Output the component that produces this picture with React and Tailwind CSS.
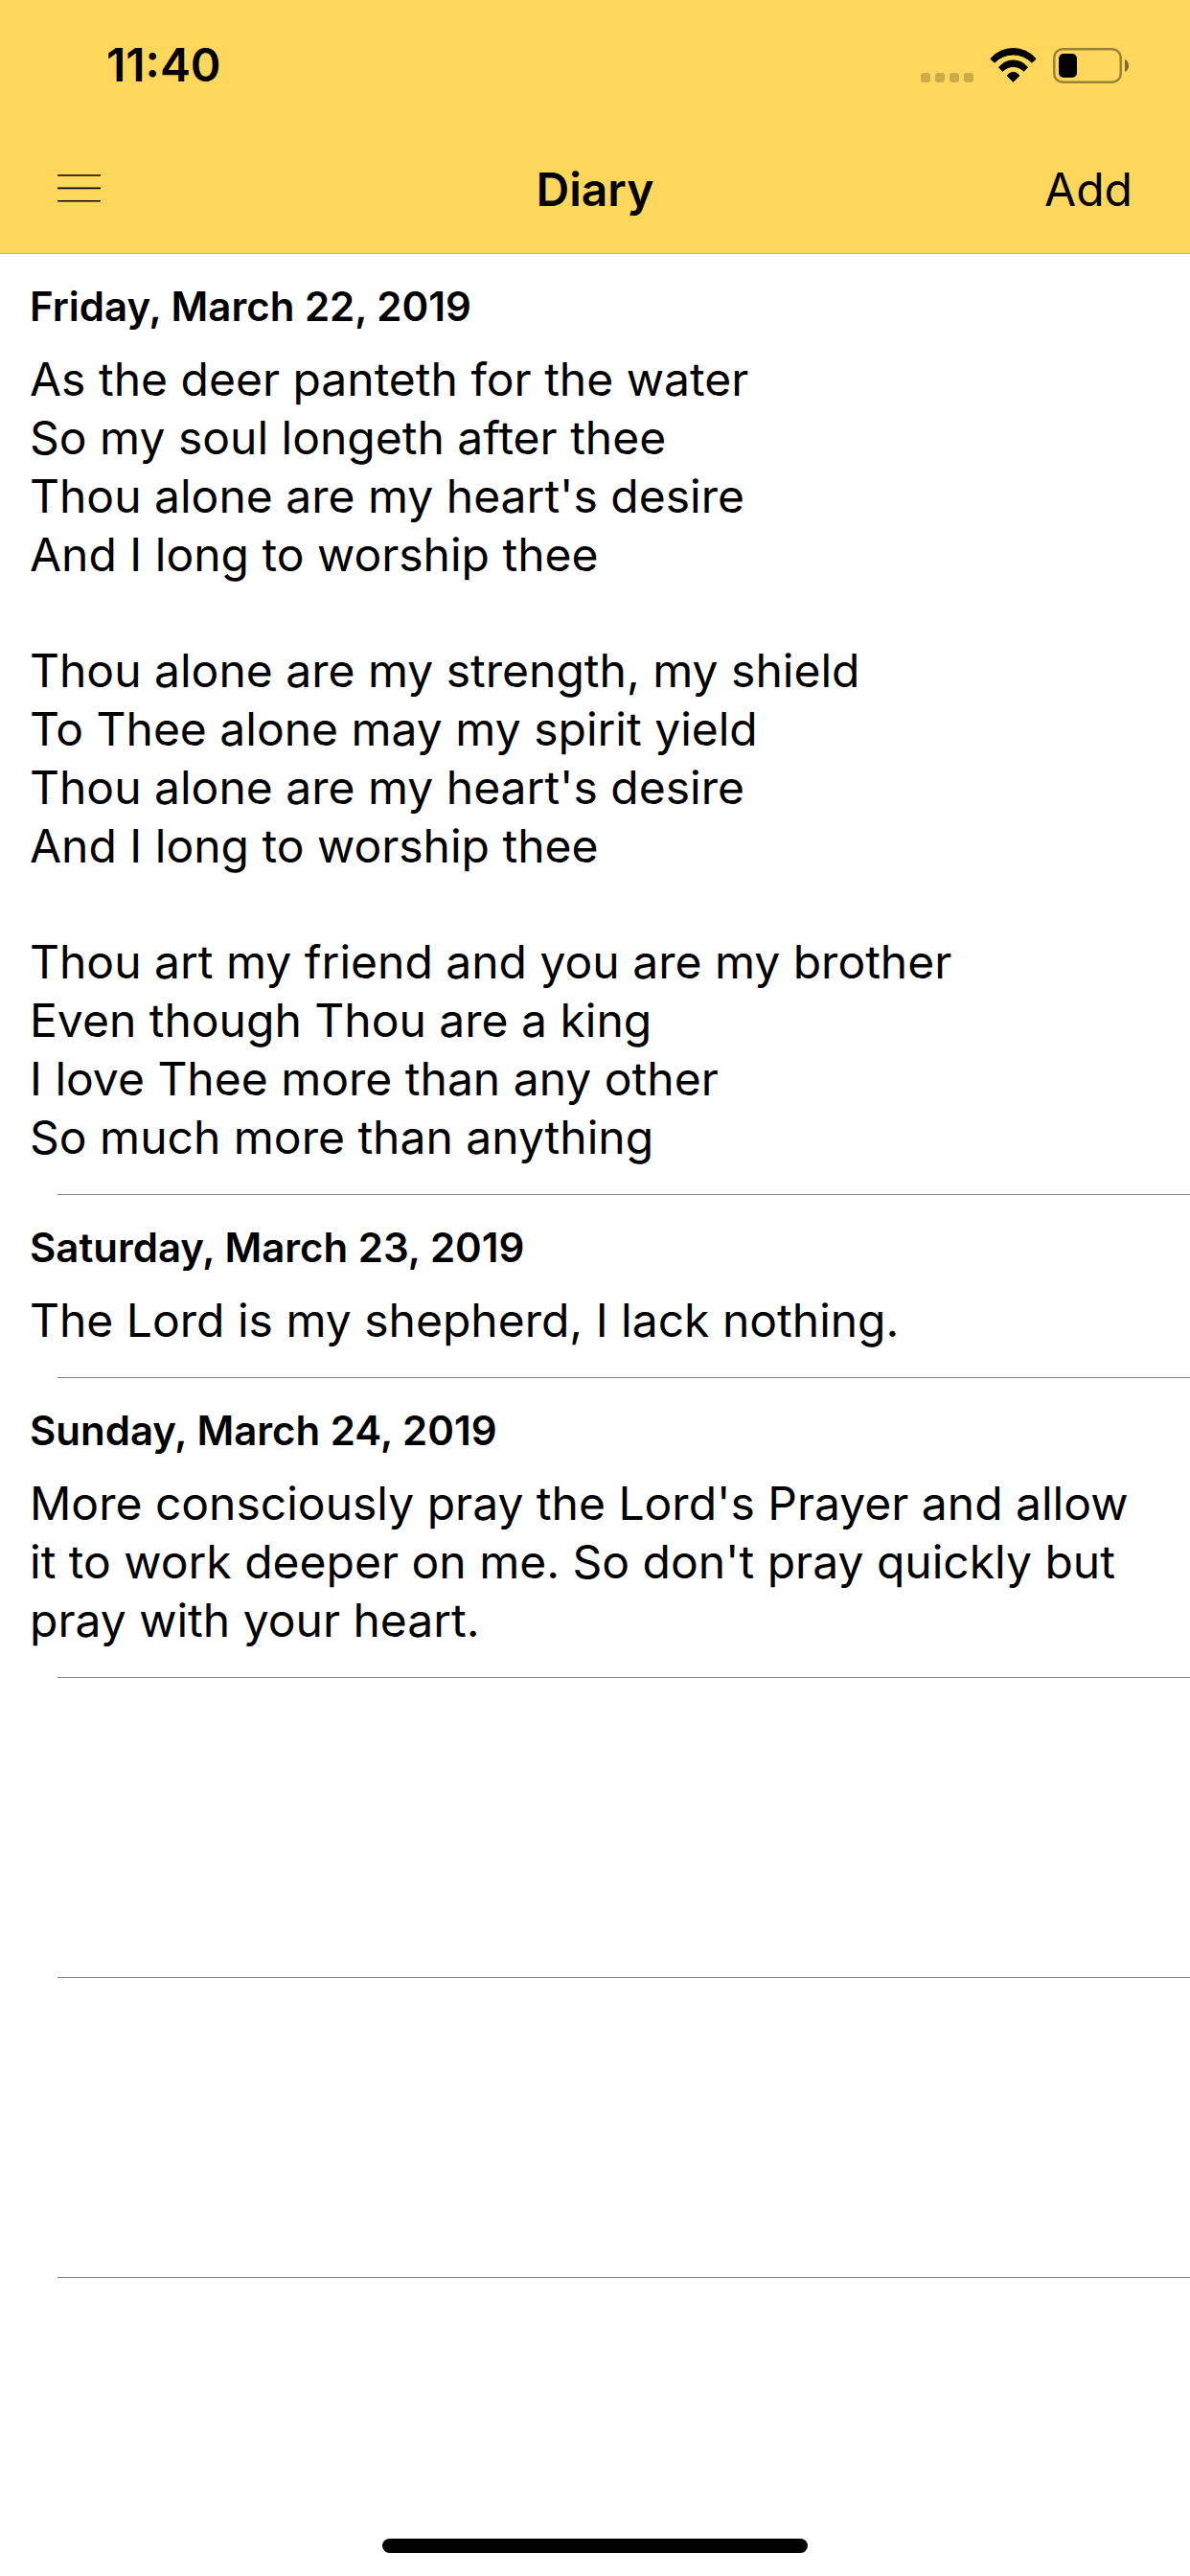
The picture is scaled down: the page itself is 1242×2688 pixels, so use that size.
const entries = [
  {
    date: 'Friday, March 22, 2019',
    paragraphs: [
      "As the deer panteth for the water\nSo my soul longeth after thee\nThou alone are my heart's desire\nAnd I long to worship thee",
      "Thou alone are my strength, my shield\nTo Thee alone may my spirit yield\nThou alone are my heart's desire\nAnd I long to worship thee",
      'Thou art my friend and you are my brother\nEven though Thou are a king\nI love Thee more than any other\nSo much more than anything',
    ],
  },
  {
    date: 'Saturday, March 23, 2019',
    paragraphs: ['The Lord is my shepherd, I lack nothing.'],
  },
  {
    date: 'Sunday, March 24, 2019',
    paragraphs: [
      "More consciously pray the Lord's Prayer and allow it to work deeper on me. So don't pray quickly but pray with your heart.",
    ],
  },
];

const emptyRows = [1, 2];

function SignalDots() {
  return (
    <svg width="55" height="37" viewBox="0 0 55 37" fill="#000" fillOpacity="0.2" aria-hidden="true">
      <rect x="0" y="26" width="10" height="10" rx="3" />
      <rect x="15" y="26" width="10" height="10" rx="3" />
      <rect x="30" y="26" width="10" height="10" rx="3" />
      <rect x="45" y="26" width="10" height="10" rx="3" />
    </svg>
  );
}

function WifiIcon() {
  return (
    <svg
      width="49"
      height="37"
      viewBox="0 0 49 37"
      fill="#000"
      stroke="#000"
      strokeWidth="1"
      strokeLinejoin="round"
      aria-hidden="true"
    >
      <path d="M0.8 11.4A31.2 31.2 0 0 1 48.2 11.4L44 15.3A27 27 0 0 0 5 15.3Z" />
      <path d="M9.5 20.2A19.2 19.2 0 0 1 39.5 20.2L35.4 24.3A14.8 14.8 0 0 0 13.6 24.3Z" />
      <path d="M18.2 29A7.4 7.4 0 0 1 30.8 29L24.5 35.3Z" />
    </svg>
  );
}

function BatteryIcon() {
  return (
    <svg width="79" height="37" viewBox="0 0 79 37" aria-hidden="true">
      <rect
        x="1.25"
        y="1.25"
        width="69.5"
        height="34.5"
        rx="9"
        fill="none"
        stroke="#000"
        strokeOpacity="0.4"
        strokeWidth="2.5"
      />
      <rect x="6" y="6" width="19" height="25" rx="5" fill="#000" />
      <path d="M75 12C80.3 14 80.3 23 75 25Z" fill="#000" fillOpacity="0.5" />
    </svg>
  );
}

function MenuIcon() {
  return (
    <svg width="45" height="32" viewBox="0 0 45 32" stroke="#000" strokeWidth="1.6" aria-hidden="true">
      <path d="M0 1H45M0 14.4H45M0 27.7H45" />
    </svg>
  );
}

function Entry({ date, paragraphs }) {
  return (
    <li>
      <div className="px-[31px] pt-[30px] pb-[29px]">
        <h2 className="text-[42px] leading-[50px] font-semibold">{date}</h2>
        <div className="mt-5 space-y-[60px]">
          {paragraphs.map((text) => (
            <p key={text} className="text-5xl leading-[61px] whitespace-pre-line">
              {text}
            </p>
          ))}
        </div>
      </div>
      <div className="ml-[60px] h-px bg-[#808080]" />
    </li>
  );
}

function App() {
  return (
    <div className="min-h-screen flex flex-col bg-white text-black font-['Inter','Liberation_Sans',sans-serif]">
      <header className="bg-[#ffd75c] border-b border-[#b2b2b2]">
        {/* Status bar */}
        <div className="flex items-center justify-between h-[132px] pt-1 pl-[111px] pr-16">
          <time className="text-5xl leading-none font-semibold">11:40</time>
          <div className="flex items-center gap-[17px]">
            <SignalDots />
            <WifiIcon />
            <BatteryIcon />
          </div>
        </div>

        {/* Navigation bar */}
        <nav className="grid grid-cols-3 items-center h-[132px] px-[60px]">
          <button type="button" aria-label="Menu" className="justify-self-start">
            <MenuIcon />
          </button>
          <h1 className="justify-self-center text-5xl leading-none font-semibold">Diary</h1>
          <button type="button" className="justify-self-end text-5xl leading-none">
            Add
          </button>
        </nav>
      </header>

      <main>
        <ul>
          {entries.map((entry) => (
            <Entry key={entry.date} date={entry.date} paragraphs={entry.paragraphs} />
          ))}
          {emptyRows.map((row) => (
            <li key={row} aria-hidden="true" className="pt-78">
              <div className="ml-[60px] h-px bg-[#808080]" />
            </li>
          ))}
        </ul>
      </main>

      {/* Home indicator */}
      <div className="mt-auto flex justify-center pb-6">
        <div className="w-[444px] h-[15px] rounded-full bg-black" />
      </div>
    </div>
  );
}

export default App;
